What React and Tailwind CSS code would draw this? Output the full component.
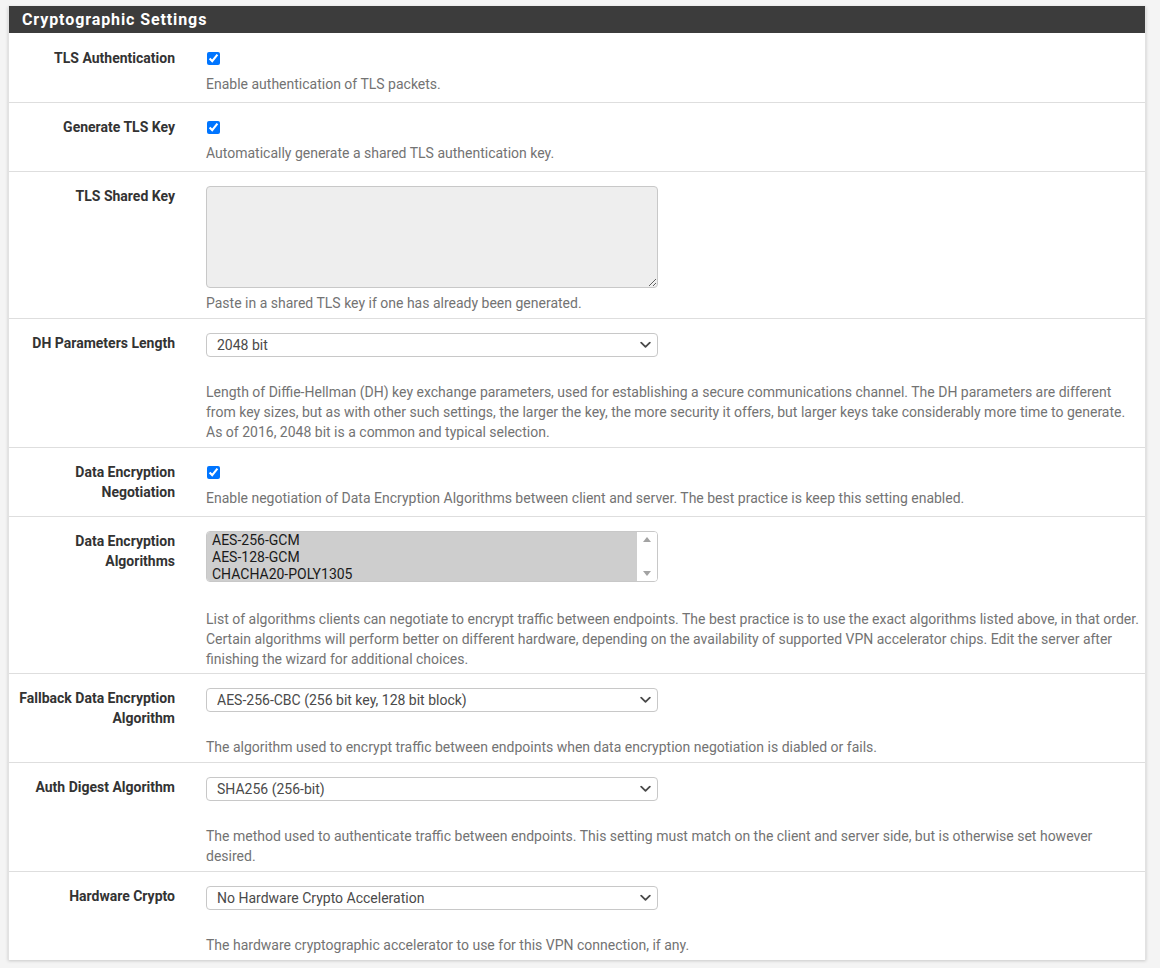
import React from "react";

const Chevron = () => (
  <svg className="absolute right-[7px] top-1/2 -translate-y-1/2 pointer-events-none" width="11" height="7" viewBox="0 0 11 7">
    <polyline points="1.2,1.2 5.5,5.4 9.8,1.2" fill="none" stroke="#4a4a4a" strokeWidth="1.8" strokeLinecap="round" strokeLinejoin="round" />
  </svg>
);

const Select = ({ value }) => (
  <div className="relative w-[452px] h-[24px]">
    <select
      defaultValue={value}
      className="appearance-none w-full h-full border border-[#c8c8c8] rounded-[4px] bg-white pl-[10px] text-[14px] leading-[20px] text-[#4a4a4a] outline-none"
      style={{ fontFamily: "Roboto, 'Noto Sans', sans-serif" }}
    >
      <option>{value}</option>
    </select>
    <Chevron />
  </div>
);

const Check = () => (
  <div className="h-[20px] flex items-center">
    <input type="checkbox" defaultChecked className="w-[13px] h-[13px] ml-[1px] accent-[#0075ff]" />
  </div>
);

const Help = ({ lines, mt }) => (
  <div className={`text-[14px] leading-[20px] text-[#737373] ${mt}`}>
    {lines.map((l, i) => (
      <div key={i} className="whitespace-nowrap">{l}</div>
    ))}
  </div>
);

const Row = ({ label, children, first, pb }) => (
  <div className={`flex ${first ? "pt-[15px]" : "border-t border-[#dedede] pt-[14px]"} ${pb}`}>
    <div className="w-[182px] shrink-0 pr-[16px] text-right text-[14px] leading-[20px] font-bold text-[#333]">
      {label.map((l, i) => (
        <div key={i}>{l}</div>
      ))}
    </div>
    <div className="pl-[15px] flex-1 min-w-0">{children}</div>
  </div>
);

export default function App() {
  return (
    <div
      className="min-h-[968px] bg-[#f4f4f4] pt-[6px] pl-[8px] pr-[14px] pb-[8px]"
      style={{ fontFamily: "Roboto, 'Noto Sans', sans-serif" }}
    >
      <div className="bg-white shadow-[0_1px_3px_rgba(0,0,0,0.18)] border-x border-[#e2e2e2]">
        <div className="h-[27px] bg-[#3c3c3c] flex items-center pl-[13px] text-white text-[16px] font-bold tracking-[0.9px]">
          Cryptographic Settings
        </div>

        <Row label={["TLS Authentication"]} first pb="pb-[8px]">
          <Check />
          <Help mt="mt-[6px]" lines={["Enable authentication of TLS packets."]} />
        </Row>

        <Row label={["Generate TLS Key"]} pb="pb-[8px]">
          <Check />
          <Help mt="mt-[6px]" lines={["Automatically generate a shared TLS authentication key."]} />
        </Row>

        <Row label={["TLS Shared Key"]} pb="pb-[5px]">
          <textarea
            readOnly
            className="block w-[452px] h-[102px] bg-[#eeeeee] border border-[#c8c8c8] rounded-[4px] outline-none"
          />
          <Help mt="mt-[5px]" lines={["Paste in a shared TLS key if one has already been generated."]} />
        </Row>

        <Row label={["DH Parameters Length"]} pb="pb-[5px]">
          <Select value="2048 bit" />
          <Help
            mt="mt-[25px]"
            lines={[
              "Length of Diffie-Hellman (DH) key exchange parameters, used for establishing a secure communications channel. The DH parameters are different",
              "from key sizes, but as with other such settings, the larger the key, the more security it offers, but larger keys take considerably more time to generate.",
              "As of 2016, 2048 bit is a common and typical selection.",
            ]}
          />
        </Row>

        <Row label={["Data Encryption", "Negotiation"]} pb="pb-[8px]">
          <Check />
          <Help
            mt="mt-[6px]"
            lines={["Enable negotiation of Data Encryption Algorithms between client and server. The best practice is keep this setting enabled."]}
          />
        </Row>

        <Row label={["Data Encryption", "Algorithms"]} pb="pb-[4px]">
          <div className="w-[452px] h-[51px] border border-[#c8c8c8] rounded-[4px] flex overflow-hidden bg-white">
            <div className="flex-1 bg-[#cecece] pl-[5px] text-[14px] leading-[17px] text-[#1a1a1a]">
              <div>AES-256-GCM</div>
              <div>AES-128-GCM</div>
              <div>CHACHA20-POLY1305</div>
            </div>
            <div className="w-[20px] bg-white flex flex-col items-center justify-between py-[5px]">
              <svg width="8" height="5" viewBox="0 0 8 5"><polygon points="4,0 8,5 0,5" fill="#a3a3a3" /></svg>
              <svg width="8" height="5" viewBox="0 0 8 5"><polygon points="0,0 8,0 4,5" fill="#a3a3a3" /></svg>
            </div>
          </div>
          <Help
            mt="mt-[27px]"
            lines={[
              "List of algorithms clients can negotiate to encrypt traffic between endpoints. The best practice is to use the exact algorithms listed above, in that order.",
              "Certain algorithms will perform better on different hardware, depending on the availability of supported VPN accelerator chips. Edit the server after",
              "finishing the wizard for additional choices.",
            ]}
          />
        </Row>

        <Row label={["Fallback Data Encryption", "Algorithm"]} pb="pb-[5px]">
          <Select value="AES-256-CBC (256 bit key, 128 bit block)" />
          <Help
            mt="mt-[25px]"
            lines={["The algorithm used to encrypt traffic between endpoints when data encryption negotiation is diabled or fails."]}
          />
        </Row>

        <Row label={["Auth Digest Algorithm"]} pb="pb-[5px]">
          <Select value="SHA256 (256-bit)" />
          <Help
            mt="mt-[25px]"
            lines={[
              "The method used to authenticate traffic between endpoints. This setting must match on the client and server side, but is otherwise set however",
              "desired.",
            ]}
          />
        </Row>

        <Row label={["Hardware Crypto"]} pb="pb-[5px]">
          <Select value="No Hardware Crypto Acceleration" />
          <Help
            mt="mt-[25px]"
            lines={["The hardware cryptographic accelerator to use for this VPN connection, if any."]}
          />
        </Row>
      </div>
    </div>
  );
}
